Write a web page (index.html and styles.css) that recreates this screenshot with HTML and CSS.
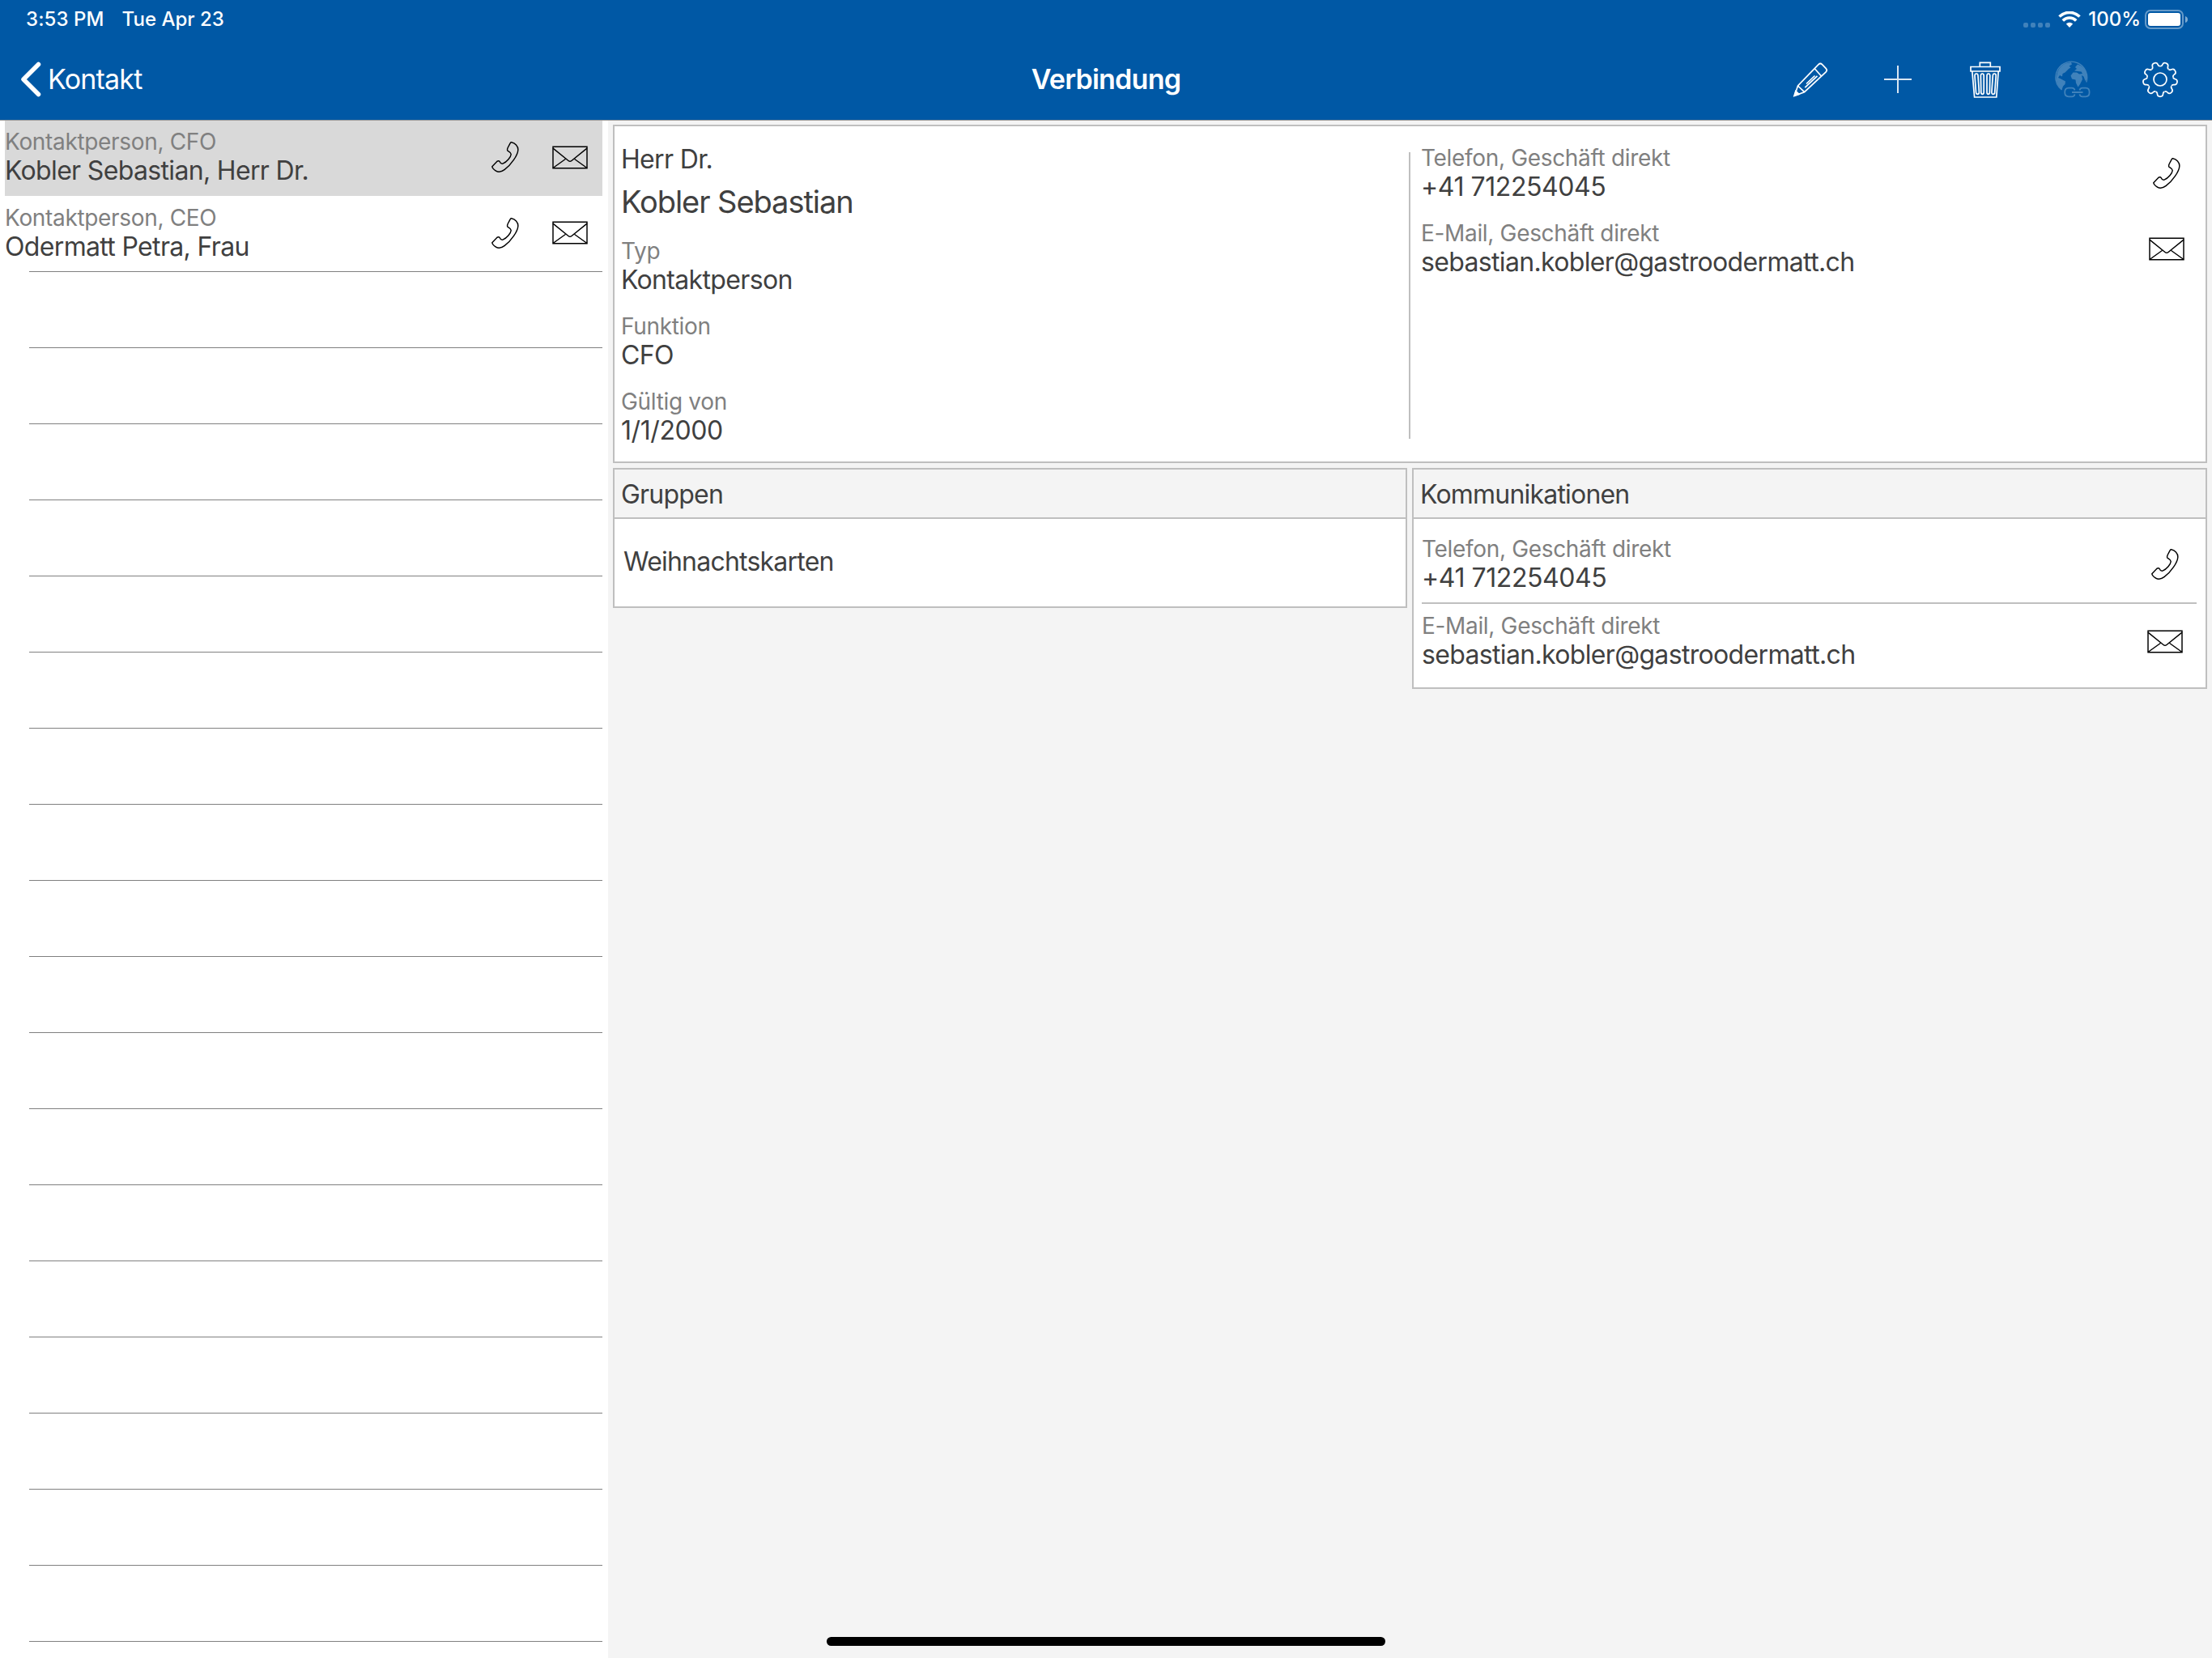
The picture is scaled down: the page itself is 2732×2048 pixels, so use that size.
FILE: index.html
```html
<!DOCTYPE html>
<html lang="de">
<head>
    <meta charset="UTF-8">
    <meta name="viewport" content="width=device-width, initial-scale=1.0">
    <title>Verbindung</title>
    <link rel="stylesheet" href="styles.css">
</head>
<body>
    <svg class="sprite">
        <symbol id="phone" viewBox="0 0 102 115">
            <path d="M74 2.5C88 5 99 16 99 30C98 50 74 86 48 105C36 114 24 114 16 109C10 106 2 98 2 93L20 74C24 71 28 71 30 74C33 81 38 83 42 82C58 76 72 57 73 47C72 40 64 37 60 34C58 31 59 26 61 22L70 5C71 3 73 2 74 2.5Z" fill="none" stroke="#000" stroke-width="4.4"/>
        </symbol>
        <symbol id="mail" viewBox="0 0 132 86">
            <g fill="none" stroke="#000" stroke-width="4.4">
                <path d="M3 3H129V83H3Z"/>
                <path d="M3 9L60 55Q66 60 72 55L129 9M3 82L49 49M129 82L83 49"/>
            </g>
        </symbol>
        <symbol id="tooth" viewBox="-23 -23 46 46">
            <path d="M-5.5 -15.4C-3.6 -15.6 -3.6 -17 -3.5 -18.5C-3.3 -20.8 -2 -21.3 0 -21.3C2 -21.3 3.3 -20.8 3.5 -18.5C3.6 -17 3.6 -15.6 5.5 -15.4"/>
        </symbol>
    </svg>

    <header class="header">
        <div class="statusbar">
            <span class="time">3:53 PM</span>
            <span class="date">Tue Apr 23</span>
            <div class="dots"><i></i><i></i><i></i><i></i></div>
            <svg class="wifi" width="28" height="20" viewBox="0 0 28 20">
                <path d="M1.5 6.6A17.6 17.6 0 0 1 26.5 6.6M5.8 11.4A11.6 11.6 0 0 1 22.2 11.4" fill="none" stroke="#fff" stroke-width="3.6"/>
                <path d="M14 20L9.8 15.6Q14 12 18.2 15.6Z" fill="#fff"/>
            </svg>
            <span class="percent">100%</span>
            <svg class="battery" width="54" height="24" viewBox="0 0 54 24">
                <rect x="1" y="1" width="46" height="22" rx="6" fill="none" stroke="#fff" stroke-opacity=".4" stroke-width="2"/>
                <rect x="4" y="4" width="40" height="16" rx="3" fill="#fff"/>
                <path d="M50 8Q53 9 53 12T50 16Z" fill="#fff" fill-opacity=".5"/>
            </svg>
        </div>
        <div class="navbar">
            <div class="back">
                <svg width="26" height="44" viewBox="0 0 26 44"><path d="M22.5 3.5L4 22L22.5 40.5" fill="none" stroke="#fff" stroke-width="5.5" stroke-linecap="round" stroke-linejoin="round"/></svg>
                <span>Kontakt</span>
            </div>
            <h1>Verbindung</h1>
            <div class="tools">
                <!-- edit -->
                <svg width="46" height="46" viewBox="-1 0 46 46" fill="none" stroke="#fff" stroke-width="1.7">
                    <path d="M2.5 43L6.5 31L32 4.6Q34.3 2.4 36.5 4.6L41.3 9.6Q43.3 11.8 41.2 13.8L14.6 38.7ZM6.5 31L14.6 38.7M27 9.5L35.5 19M30.5 18.8L15.3 33.2M27.5 18.5L17 28.5"/>
                    <path d="M2 43.5L3.8 37.5L8 41.5Z" fill="#fff"/>
                </svg>
                <!-- add -->
                <svg width="46" height="46" viewBox="0 0 46 46" fill="none" stroke="#fff" stroke-opacity=".85" stroke-width="2"><path d="M6 23H40M23 6V40"/></svg>
                <!-- delete -->
                <svg width="46" height="46" viewBox="0 0 46 46" fill="none" stroke="#fff" stroke-width="1.7">
                    <path d="M5 7.5H41V13H5ZM16.3 7.5V2.3H29.3V7.5M6.8 13L9.6 45H36.8L39.2 13"/>
                    <path d="M10 18.5Q10 16 12 16T14 18.5L15.4 39Q15.4 41.3 13.5 41.3T11.5 39ZM17.4 18.5Q17.4 16 19.3 16T21.2 18.5V39Q21.2 41.3 19.5 41.3T17.8 39ZM25 18.5Q25 16 26.9 16T28.8 18.5L28.4 39Q28.4 41.3 26.7 41.3T25 39ZM32.3 18.5Q32.3 16 34.3 16T36.2 18.5L34.7 39Q34.7 41.3 32.8 41.3T30.9 39Z"/>
                </svg>
                <!-- web link, not available -->
                <svg class="disabled" width="46" height="46" viewBox="0 0 46 46">
                    <path d="M9.5 36A19.4 19.4 0 1 1 39.8 26.5" fill="none" stroke="#fff" stroke-width="1.4"/>
                    <path d="M3.5 17Q5 8 13.5 3.5L21 2L22 4.5L18.5 6.5L20.5 8.5L18 10L13.5 14.5L10.5 16L10 19.5L7 18L5 21L8.5 22.5L14 25.5L13.5 29L11 31.5L9.5 36Q3 30 2.5 22Z" fill="#fff"/>
                    <path d="M26 8L29 4.5L33.5 6.5Q39.5 11 40.5 18L41 22L38.5 25L36.5 19.5L34 18L35 23L32 29L29.5 32.5L27 27.5L26.5 23.5L22 22.5L20.5 18.5L23.5 14.5L28 14.5L31 16.5L35 16L33.5 13.5L29 13L25 12.5L28 10Z" fill="#fff"/>
                    <path d="M25.5 36.5Q25 33.7 22 33.7H18Q13.2 33.7 13.2 39T18 44.3H22Q25 44.3 25.5 41.3M31.5 36.5Q32 33.7 35 33.7H39Q43.6 33.7 43.6 39T39 44.3H35Q32 44.3 31.5 41.3M22 39H35.5" fill="none" stroke="#fff" stroke-width="1.8"/>
                </svg>
                <!-- settings -->
                <svg width="46" height="46" viewBox="-23 -23 46 46" fill="none" stroke="#fff" stroke-width="1.7">
                    <circle r="8"/>
                    <g id="teeth"></g>
                </svg>
            </div>
        </div>
    </header>

    <div class="content">
        <aside class="sidebar" id="sidebar">
            <div class="person selected">
                <div class="field"><div class="label">Kontaktperson, CFO</div><div class="value">Kobler Sebastian, Herr Dr.</div></div>
                <svg class="phone"><use href="#phone"/></svg>
                <svg class="mail"><use href="#mail"/></svg>
            </div>
            <div class="person">
                <div class="field"><div class="label">Kontaktperson, CEO</div><div class="value">Odermatt Petra, Frau</div></div>
                <svg class="phone"><use href="#phone"/></svg>
                <svg class="mail"><use href="#mail"/></svg>
            </div>
        </aside>

        <main class="main">
            <section class="card details">
                <div class="details-left">
                    <div class="value title">Herr Dr.</div>
                    <div class="name">Kobler Sebastian</div>
                    <div class="field"><div class="label">Typ</div><div class="value">Kontaktperson</div></div>
                    <div class="field"><div class="label">Funktion</div><div class="value">CFO</div></div>
                    <div class="field"><div class="label">Gültig von</div><div class="value number">1/1/2000</div></div>
                </div>
                <div class="divider"></div>
                <div class="details-right">
                    <div class="contact">
                        <div class="field"><div class="label">Telefon, Geschäft direkt</div><div class="value number">+41 712254045</div></div>
                        <svg class="phone"><use href="#phone"/></svg>
                    </div>
                    <div class="contact">
                        <div class="field"><div class="label">E-Mail, Geschäft direkt</div><div class="value">sebastian.kobler@gastroodermatt.ch</div></div>
                        <svg class="mail"><use href="#mail"/></svg>
                    </div>
                </div>
            </section>
            <div class="columns">
                <section class="card">
                    <h2>Gruppen</h2>
                    <div class="value group">Weihnachtskarten</div>
                </section>
                <section class="card">
                    <h2>Kommunikationen</h2>
                    <div class="comm first">
                        <div class="field"><div class="label">Telefon, Geschäft direkt</div><div class="value number">+41 712254045</div></div>
                        <svg class="phone"><use href="#phone"/></svg>
                    </div>
                    <div class="comm">
                        <div class="field"><div class="label">E-Mail, Geschäft direkt</div><div class="value">sebastian.kobler@gastroodermatt.ch</div></div>
                        <svg class="mail"><use href="#mail"/></svg>
                    </div>
                </section>
            </div>
        </main>
    </div>
    <div class="home-indicator"></div>
    <script src="script.js"></script>
</body>
</html>
```
FILE: styles.css
```css
* { padding: 0; margin: 0; box-sizing: border-box; }
body {
    height: 2048px;
    overflow: hidden;
    font-family: "Inter", "Liberation Sans", sans-serif;
    color: #404040;
    background-color: #f4f4f4;
    display: flex;
    flex-direction: column;
}
svg { flex-shrink: 0; display: block; }
.sprite { position: absolute; width: 0; height: 0; }

/* header */
.header { height: 149px; background-color: #0058a5; border-bottom: 1px solid #999; color: #fff; }
.statusbar {
    height: 47px;
    padding: 0 29px 0 32px;
    display: flex;
    align-items: center;
    font-size: 24px;
    font-weight: 500;
    white-space: nowrap;
}
.time { letter-spacing: 0.1px; }
.date { margin-left: 22px; }
.dots { margin: 14px 10px 0 auto; display: flex; gap: 3px; }
.dots i { width: 6px; height: 6px; border-radius: 2px; background-color: #fff; opacity: 0.25; }
.percent { margin: 0 5px 0 9px; }
.navbar {
    height: 101px;
    display: flex;
    align-items: center;
    justify-content: space-between;
    font-size: 34px;
    padding: 0 41px;
}
.back { flex: 1; display: flex; align-items: center; gap: 8px; margin-left: -16px; letter-spacing: -0.8px; }
h1 { font-size: 34px; font-weight: 600; letter-spacing: -0.75px; margin-left: 16px; }
.tools { flex: 1; display: flex; justify-content: flex-end; gap: 62px; }
.back, .tools { flex-basis: 0; }
.disabled { opacity: 0.25; }

/* list on the left */
.content { flex: 1; display: flex; min-height: 0; }
.sidebar { width: 751px; background-color: #fff; padding: 0 7px 0 6px; overflow: hidden; }
.person { height: 94px; display: flex; align-items: center; padding: 9px 18px 12px 0; }
.person .field { flex: 1; }
.person .phone { margin-right: 41px; }
.selected { height: 93px; background-color: #d9d9d9; }
.line { height: 94px; margin: -1px 0 1px 30px; border-top: 1px solid #808080; }

.label { font-size: 28px; line-height: 34px; letter-spacing: -0.33px; color: #808080; white-space: nowrap; }
.value { font-size: 32px; line-height: 38px; letter-spacing: -0.66px; white-space: nowrap; }
.number { letter-spacing: -0.42px; }
.phone { width: 34px; height: 38px; }
.mail { width: 44px; height: 29px; }

/* cards */
.main { flex: 1; padding: 5px 6px; }
.card { background-color: #fff; border: 2px solid #bfbfbf; }
.details { height: 418px; display: flex; }
.details-left { width: 981px; padding: 21px 8px 0; }
.details-left .field { margin-bottom: 21px; }
.title { line-height: 40px; }
.name { font-size: 38px; line-height: 65px; letter-spacing: -1.05px; margin-bottom: 11px; }
.divider { width: 2px; margin: 32px 0 28px; background-color: #bfbfbf; }
.details-right { flex: 1; padding: 22px 26px 0 13px; }
.contact { display: flex; align-items: center; justify-content: space-between; margin-bottom: 21px; }
.contact .phone, .comm .phone { margin-right: 5px; }
.columns { display: grid; grid-template-columns: 981px 982px; gap: 6px; margin-top: 6px; align-items: start; }
h2 {
    height: 61px;
    padding: 1px 8px 0;
    font-size: 32px;
    font-weight: 400;
    line-height: 59px;
    letter-spacing: -0.8px;
    background-color: #f4f4f4;
    border-bottom: 2px solid #bfbfbf;
}
.group { height: 108px; line-height: 105px; letter-spacing: -0.78px; padding-left: 11px; }
.comm {
    display: flex;
    justify-content: space-between;
    align-items: center;
    margin: 0 11px 0 10px;
    padding: 10px 17px 21px 0;
}
.comm.first { padding: 20px 17px 11px 0; border-bottom: 2px solid #bfbfbf; }

.home-indicator {
    position: absolute;
    left: 1021px;
    top: 2022px;
    width: 690px;
    height: 11px;
    border-radius: 6px;
    background-color: #000;
}
```
FILE: script.js
```js
// empty rows below the last person
const sidebar = document.getElementById('sidebar');
for (let i = 0; i < 19; i++) {
    const line = document.createElement('div');
    line.className = 'line';
    sidebar.appendChild(line);
}

// nine teeth around the settings wheel
const teeth = document.getElementById('teeth');
for (let i = 0; i < 9; i++) {
    teeth.innerHTML += '<use href="#tooth" x="-23" y="-23" width="46" height="46" transform="rotate(' + (20 + i * 40) + ')"/>';
}
```
